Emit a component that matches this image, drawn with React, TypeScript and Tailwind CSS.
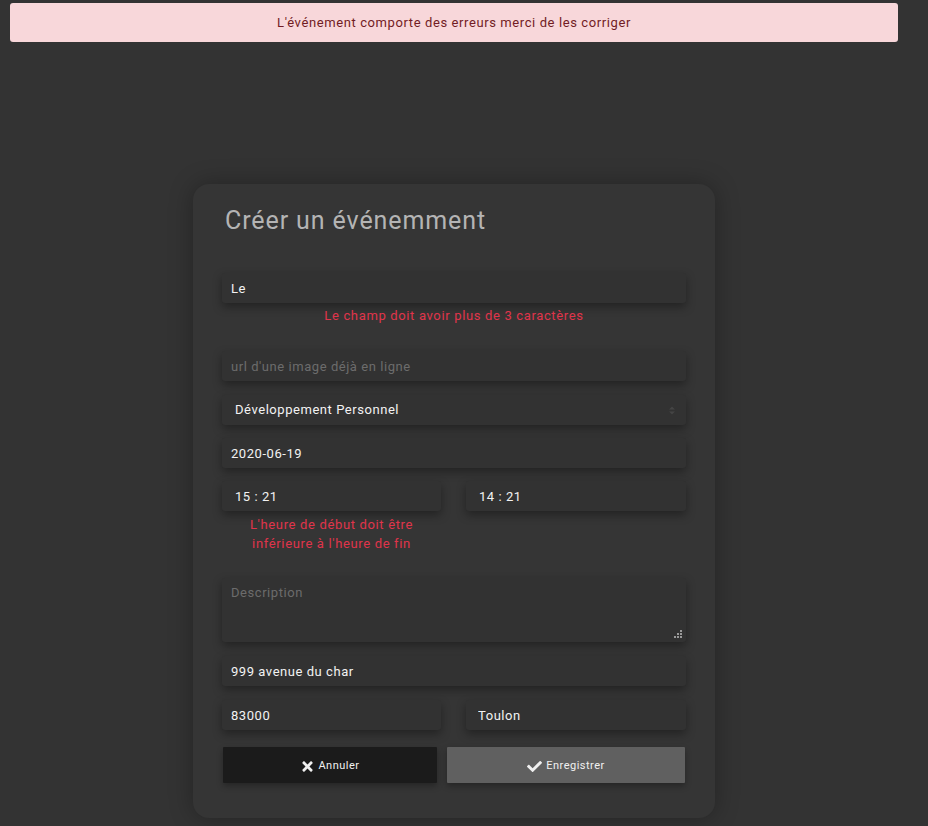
import { FaCheck, FaTimes } from "react-icons/fa";

const FONT = { fontFamily: "Roboto, 'Liberation Sans', sans-serif" };

const field =
  "h-[30px] w-full rounded-[3px] bg-[#323232] px-[9px] text-[13px] tracking-[0.55px] shadow-[0_4px_10px_rgba(0,0,0,0.35)] outline-none placeholder:text-[#6c6c6c]";

function Field({ value, placeholder, className = "" }: { value?: string; placeholder?: string; className?: string }) {
  return (
    <input
      readOnly
      value={value ?? ""}
      placeholder={placeholder}
      className={`${field} text-[#f2f2f2] ${className}`}
    />
  );
}

function ErrorText({ children }: { children: React.ReactNode }) {
  return (
    <p className="text-center text-[13px] leading-[19px] tracking-[0.65px] text-[#e0344b]">{children}</p>
  );
}

export default function App() {
  return (
    <div className="min-h-screen bg-[#333333] pb-[8px] pt-[3px]" style={FONT}>
      {/* ALERT */}
      <div className="mx-[10px] w-[888px] rounded-[3px] bg-[#f8d7da] py-[11px] text-center text-[13px] leading-[17px] tracking-[0.6px] text-[#721c24]">
        L'événement comporte des erreurs merci de les corriger
      </div>

      {/* CARD */}
      <div className="mx-auto mt-[142px] w-[522px] translate-x-[-10px] rounded-[16px] bg-[#353535] px-[29px] pb-[35px] pt-[22px] shadow-[0_0_24px_rgba(0,0,0,0.3)]">
        <h1 className="pl-[3px] text-[25px] font-normal leading-[30px] tracking-[0.9px] text-[#b4b4b4]">
          Créer un événemment
        </h1>

        <div className="mt-[37px] flex flex-col">
          <Field value="Le" />
          <div className="mt-[3px]">
            <ErrorText>Le champ doit avoir plus de 3 caractères</ErrorText>
          </div>

          <Field className="mt-[26px]" placeholder="url d'une image déjà en ligne" />

          <div className={`${field} mt-[14px] flex items-center justify-between pl-[13px] text-[#f2f2f2]`}>
            <span>Développement Personnel</span>
            <svg width="6" height="9" viewBox="0 0 6 9" className="mr-[2px]">
              <path d="M0 3.5L3 0.5L6 3.5Z M0 5.5L3 8.5L6 5.5Z" fill="#444444" />
            </svg>
          </div>

          <Field className="mt-[13px]" value="2020-06-19" />

          <div className="mt-[13px] grid grid-cols-[219px_220px] justify-between">
            <div>
              <Field className="pl-[13px]" value="15 : 21" />
              <div className="mt-[4px]">
                <ErrorText>
                  L'heure de début doit être
                  <br />
                  inférieure à l'heure de fin
                </ErrorText>
              </div>
            </div>
            <Field className="pl-[13px]" value="14 : 21" />
          </div>

          <div className={`${field} relative mt-[25px] h-[64px] pt-[6px] leading-[18px]`}>
            <span className="text-[#6c6c6c]">Description</span>
            <svg width="9" height="9" viewBox="0 0 9 9" className="absolute bottom-[3px] right-[3px]">
              <rect x="6" y="0" width="2" height="2" fill="#9a9a9a" />
              <rect x="3" y="3" width="2" height="2" fill="#9a9a9a" />
              <rect x="6" y="3" width="2" height="2" fill="#9a9a9a" />
              <rect x="0" y="6" width="2" height="2" fill="#9a9a9a" />
              <rect x="3" y="6" width="2" height="2" fill="#9a9a9a" />
              <rect x="6" y="6" width="2" height="2" fill="#9a9a9a" />
            </svg>
          </div>

          <Field className="mt-[14px]" value="999 avenue du char" />

          <div className="mt-[14px] grid grid-cols-[219px_220px] justify-between">
            <Field value="83000" />
            <Field className="pl-[12px]" value="Toulon" />
          </div>

          <div className="mt-[17px] flex gap-[10px] pl-[1px] pr-[1px]">
            <button className="flex h-[36px] w-[214px] items-center justify-center gap-[3px] rounded-[1px] bg-[#1b1b1b] pt-[2px] text-[11px] tracking-[0.5px] text-[#f0f0f0] shadow-[0_3px_6px_rgba(0,0,0,0.3)]">
              <FaTimes className="h-[15px] w-[15px]" />
              Annuler
            </button>
            <button className="flex h-[36px] flex-1 items-center justify-center gap-[4px] rounded-[1px] bg-[#606060] pt-[2px] text-[11px] tracking-[0.5px] text-[#f0f0f0] shadow-[0_3px_6px_rgba(0,0,0,0.3)]">
              <FaCheck className="h-[15px] w-[15px]" />
              Enregistrer
            </button>
          </div>
        </div>
      </div>
    </div>
  );
}
